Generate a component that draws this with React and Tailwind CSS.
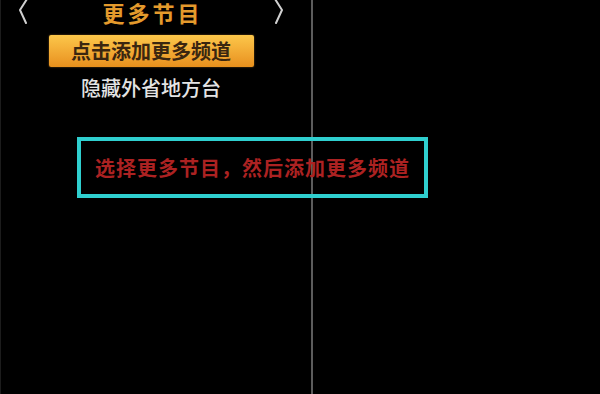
import React from "react";

const cjk = { fontFamily: '"Noto Sans CJK SC", "Noto Sans", sans-serif' };

const Chevron = ({ dir }) => (
  <svg width="12" height="26" viewBox="0 0 12 26" className="shrink-0">
    <path
      d={dir === "left" ? "M10 0 L3 11 L9 24" : "M2 0 L9 11 L3 24"}
      fill="none"
      stroke="#d0d0d0"
      strokeWidth="2"
      strokeLinecap="round"
      strokeLinejoin="round"
    />
  </svg>
);

export default function App() {
  return (
    <div className="relative w-[600px] h-[394px] bg-black overflow-hidden flex" style={cjk}>
      {/* left panel */}
      <div className="w-[313px] h-full border-l border-[#1c1c1c] border-r-2 border-r-[#5c5c5c] shrink-0">
        <div className="w-[300px] flex flex-col items-center">
          <div className="w-full flex items-center justify-between pl-[16px] pr-[16px] h-[24px]">
            <Chevron dir="left" />
            <div className="text-[22px] leading-[24px] font-bold text-[#e49a2c] tracking-[3px] pl-[3px]">更多节目</div>
            <Chevron dir="right" />
          </div>
          <button className="mt-[11px] w-[205px] h-[32px] rounded-[2px] bg-gradient-to-b from-[#fcc74a] to-[#e8901c] text-[#3a2610] text-[20px] leading-[32px] font-bold shadow-[0_0_2px_rgba(255,180,60,0.5)]">
            点击添加更多频道
          </button>
          <div className="mt-[9px] text-[20px] leading-[24px] text-[#e4e4e4] font-medium">隐藏外省地方台</div>
        </div>
      </div>
      <div className="flex-1" />

      {/* highlighted hint box */}
      <div className="absolute left-[77px] top-[137px] w-[351px] h-[61px] border-[4px] border-[#2fcfcf] flex items-center justify-center">
        <span className="text-[20px] leading-[24px] text-[#ac2222] font-semibold tracking-[1px]">选择更多节目，然后添加更多频道</span>
      </div>
    </div>
  );
}
